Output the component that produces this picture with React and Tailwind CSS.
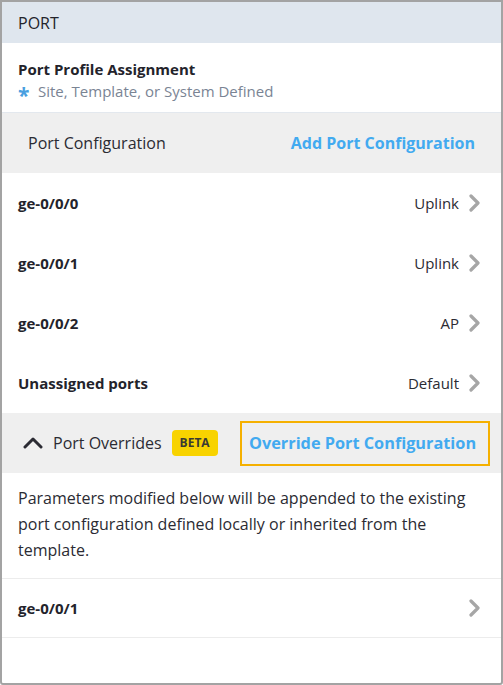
import React from 'react';

const ChevronRight = () => (
  <svg width="14" height="18" viewBox="0 0 14 18" className="shrink-0">
    <polyline points="3,2 10,9 3,16" fill="none" stroke="#a6a6a6" strokeWidth="3.2" strokeLinecap="round" strokeLinejoin="round" />
  </svg>
);

const ChevronUp = () => (
  <svg width="20" height="12" viewBox="0 0 20 12" className="shrink-0">
    <polyline points="2,10 10,2 18,10" fill="none" stroke="#2b2b33" strokeWidth="3" strokeLinecap="round" strokeLinejoin="round" />
  </svg>
);

const PortRow = ({ name, value, tall = true }) => (
  <div className={tall ? 'h-[60px] flex items-center justify-between pl-4 pr-[19px]' : 'h-[58px] flex items-center justify-between pl-4 pr-[19px]'}>
    <span className="text-[15px] font-bold text-[#23232b]">{name}</span>
    <div className="flex items-center gap-[9px]">
      {value && <span className="text-[15px] text-[#2b2b33]">{value}</span>}
      <ChevronRight />
    </div>
  </div>
);

const ports = [
  { name: 'ge-0/0/0', value: 'Uplink' },
  { name: 'ge-0/0/1', value: 'Uplink' },
  { name: 'ge-0/0/2', value: 'AP' },
  { name: 'Unassigned ports', value: 'Default' },
];

export default function App() {
  return (
    <div className="w-[503px] h-[685px] bg-white border-2 border-[#a3a3a3] rounded-b-[3px] overflow-hidden text-[#2b2b33]" style={{ fontFamily: '"Open Sans", "Liberation Sans", sans-serif' }}>
      {/* Header */}
      <div className="h-[41px] bg-[#dfe6ee] flex items-center px-4 text-base text-[#23232b]">PORT</div>

      {/* Profile assignment */}
      <div className="h-[70px] pt-4 pl-4 border-b border-[#e3e8ee]">
        <div className="text-[15px] leading-5 font-bold text-[#23232b]">Port Profile Assignment</div>
        <div className="mt-[2px] h-5 flex items-center text-[15px] leading-5 text-[#7a8494]">
          <span className="w-[20px] text-[#4a9fe0] font-bold text-[21px] leading-5 translate-y-[4px]">*</span>
          <span>Site, Template, or System Defined</span>
        </div>
      </div>

      {/* Port configuration band */}
      <div className="h-[60px] bg-[#efefef] flex items-center justify-between px-[26px]">
        <span className="text-base">Port Configuration</span>
        <span className="text-base font-bold text-[#42aaf0]">Add Port Configuration</span>
      </div>

      {ports.map((p) => (
        <PortRow key={p.name} name={p.name} value={p.value} />
      ))}

      {/* Overrides band */}
      <div className="h-[60px] bg-[#efefef] flex items-center justify-between pl-[21px] pr-[11px]">
        <div className="flex items-center">
          <ChevronUp />
          <span className="ml-[10px] text-base">Port Overrides</span>
          <span className="ml-[10px] h-[26px] px-[8px] rounded-[4px] bg-[#f8d300] text-[12px] font-bold flex items-center text-[#3a3a33]">BETA</span>
        </div>
        <div className="w-[250px] h-[45px] border-2 border-[#f5b000] flex items-center pl-[7px]">
          <span className="text-[16.3px] font-bold text-[#42aaf0]">Override Port Configuration</span>
        </div>
      </div>

      {/* Description */}
      <div className="px-4 pt-3 pb-[15px] text-base leading-[26px] text-[#2b2b33] border-b border-[#ececec]">
        Parameters modified below will be appended to the existing port configuration defined locally or inherited from the template.
      </div>

      <div className="border-b border-[#ececec]">
        <PortRow name="ge-0/0/1" tall={false} />
      </div>
    </div>
  );
}
